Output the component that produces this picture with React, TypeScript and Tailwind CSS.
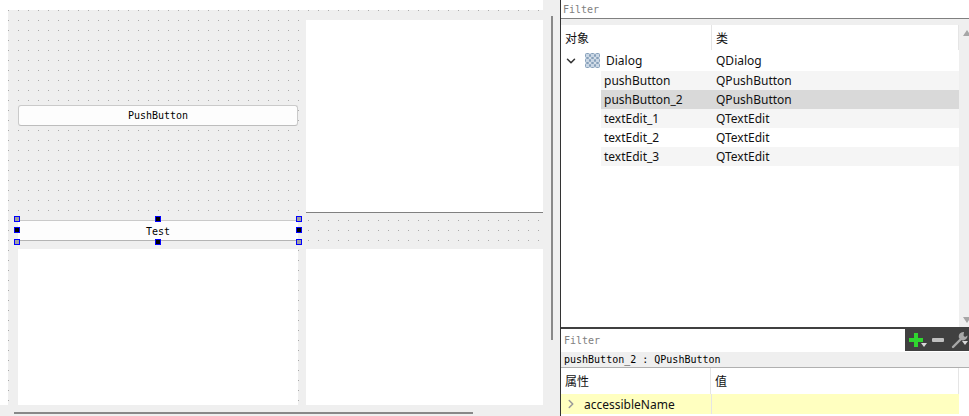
import React from 'react';
import { ChevronDown, ChevronRight } from 'lucide-react';

const mono = "font-['DejaVu_Sans_Mono',monospace] text-[10px] leading-none";
const ui = "font-['Noto_Sans','Noto_Sans_CJK_SC',sans-serif] text-[12px] leading-none text-[#111]";
const cjk = "font-['Noto_Sans_CJK_SC',sans-serif] text-[12px] leading-none text-[#111]";

const rows = [
  { name: 'pushButton', type: 'QPushButton', bg: 'bg-[#f5f5f5]' },
  { name: 'pushButton_2', type: 'QPushButton', bg: 'bg-[#d9d9d9]' },
  { name: 'textEdit_1', type: 'QTextEdit', bg: 'bg-[#f5f5f5]' },
  { name: 'textEdit_2', type: 'QTextEdit', bg: 'bg-white' },
  { name: 'textEdit_3', type: 'QTextEdit', bg: 'bg-[#f5f5f5]' }
];

function Handle({ className }: { className: string }) {
  return <div className={`absolute h-[6px] w-[6px] border border-[#0000ff] ${className}`} />;
}

function FormView() {
  return <div className="h-[395px] w-[535px] bg-[#efefef] bg-[conic-gradient(at_1px_1px,transparent_75%,#ababab_0)] bg-[length:10px_10px] pt-[10px]">
      <div className="grid grid-cols-[298px_237px] grid-rows-[193px_36px_156px]">
        <div className="pl-[10px] pt-[85px]">
          <div className={`flex h-[21px] w-[280px] items-center justify-center rounded-[3px] border border-[#cacaca] border-b-[#bdbdbd] bg-[#fdfdfd] pt-[1px] text-black ${mono}`}>
            PushButton
          </div>
        </div>
        <div className="border-b border-[#808080] bg-white" />
        <div className="pl-[10px] pt-[7px]">
          <div className={`relative flex h-[21px] w-[280px] items-center justify-center border-y border-t-[#cacaca] border-b-[#b4b4b4] bg-[#fdfdfd] pt-[2px] text-black ${mono}`}>
            Test
            <Handle className="left-[-4px] top-[-5px] bg-[#a0a0a0]" />
            <Handle className="left-[137px] top-[-5px] bg-black" />
            <Handle className="left-[278px] top-[-5px] bg-[#a0a0a0]" />
            <Handle className="left-[-4px] top-[6px] bg-black" />
            <Handle className="left-[278px] top-[6px] bg-black" />
            <Handle className="left-[-4px] top-[18px] bg-[#a0a0a0]" />
            <Handle className="left-[137px] top-[18px] bg-black" />
            <Handle className="left-[278px] top-[18px] bg-[#a0a0a0]" />
          </div>
        </div>
        <div />
        <div className="pl-[10px]">
          <div className="h-full w-[280px] bg-white" />
        </div>
        <div className="bg-white" />
      </div>
    </div>;
}

function DialogIcon() {
  return <svg width="15" height="15" viewBox="0 0 15 15">
      {[0, 5, 10].map(y => [0, 5, 10].map(x => <rect key={`${x}-${y}`} x={x + 0.5} y={y + 0.5} width="4" height="4" rx="1" fill="#c9d6e4" stroke="#86a0ba" />))}
    </svg>;
}

function ObjectTree() {
  return <div className="flex h-[302px]">
      <div className="w-[398px] bg-white">
        <div className="flex h-[25px]">
          <div className={`flex w-[151px] items-center border-r border-[#e5e5e5] pl-[4px] ${cjk}`}>对象</div>
          <div className={`flex flex-1 items-center border-r border-[#e5e5e5] pl-[4px] ${cjk}`}>类</div>
        </div>
        <div className="flex h-[21px] items-center">
          <ChevronDown className="ml-[3px] h-[14px] w-[14px] text-[#333]" strokeWidth={2.6} />
          <div className="ml-[7px]"><DialogIcon /></div>
          <span className={`ml-[6px] w-[110px] ${ui}`}>Dialog</span>
          <span className={ui}>QDialog</span>
        </div>
        {rows.map(row => <div key={row.name} className={`ml-[40px] flex h-[19px] items-center pl-[3px] ${row.bg}`}>
            <span className={`w-[112px] ${ui}`}>{row.name}</span>
            <span className={ui}>{row.type}</span>
          </div>)}
      </div>
      <div className="flex w-[10px] flex-col justify-between bg-[#efefef] pl-[4px] pb-[4px] pt-[5px]">
        <svg width="8" height="6" viewBox="0 0 8 6"><path d="M4 0 L8 6 L0 6 Z" fill="#a6a6a6" /></svg>
        <svg width="8" height="6" viewBox="0 0 8 6"><path d="M0 0 L8 0 L4 6 Z" fill="#a6a6a6" /></svg>
      </div>
    </div>;
}

function Toolbar() {
  return <div className="flex h-[24px] w-[64px] items-center bg-[#404040] pt-[1px]">
      <div className="relative ml-[3px] h-[16px] w-[16px]">
        <svg width="16" height="16" viewBox="0 0 16 16">
          <path d="M6 1 H10 V6 H15 V10 H10 V15 H6 V10 H1 V6 H6 Z" fill="#2fd62f" />
        </svg>
        <svg className="absolute bottom-[1px] right-[-3px]" width="6" height="4" viewBox="0 0 6 4"><path d="M0 0 H6 L3 4 Z" fill="#d8d8d8" /></svg>
      </div>
      <div className="ml-[8px] h-[4px] w-[15px] rounded-[1px] bg-[#c0c0c0]" />
      <div className="relative ml-[7px] h-[18px] w-[18px] shrink-0">
        <svg width="18" height="18" viewBox="0 0 18 18">
          <path d="M2 16 L10 8" stroke="#a8a8a8" strokeWidth="2.4" strokeLinecap="round" />
          <path d="M13 1 A4.6 4.6 0 0 0 8 7 L10 9 A4.6 4.6 0 0 0 16.5 4.5 L14 6 L12.5 4.5 Z" fill="#a8a8a8" />
        </svg>
        <svg className="absolute bottom-[4px] right-[1px]" width="6" height="4" viewBox="0 0 6 4"><path d="M0 0 H6 L3 4 Z" fill="#d8d8d8" /></svg>
      </div>
    </div>;
}

export default function App() {
  return <div className="flex h-[416px] w-[969px] overflow-hidden bg-white">
      <div className="flex w-[561px] flex-col border-r border-[#333333]">
        <div className="flex h-[405px]">
          <div className="w-[543px] pl-[8px] pt-[10px]">
            <FormView />
          </div>
          <div className="flex-1 bg-[#efefef] pl-[8px] pt-[16px]">
            <div className="h-[324px] w-[2px] bg-[#888888]" />
          </div>
        </div>
        <div className="flex-1 bg-[#efefef] pl-[14px] pt-[7px]">
          <div className="h-[2px] w-[459px] bg-[#888888]" />
        </div>
      </div>
      <div className="flex w-[408px] flex-col">
        <div className={`flex h-[19px] items-center border-b border-[#808080] pl-[2px] pt-[2px] text-[#808080] ${mono}`}>Filter</div>
        <div className="h-[6px] bg-[#efefef]" />
        <ObjectTree />
        <div className="flex h-[25px] border-t-2 border-[#404040]">
          <div className={`flex flex-1 items-center pl-[3px] pt-[1px] text-[#808080] ${mono}`}>Filter</div>
          <div className="mt-[-2px]"><Toolbar /></div>
        </div>
        <div className={`flex h-[16px] items-center border-b border-[#b0b0b0] bg-[#efefef] pl-[3px] pt-[1px] text-black ${mono}`}>
          pushButton_2 : QPushButton
        </div>
        <div className="flex h-[26px] w-[398px] bg-white">
          <div className={`flex w-[150px] items-center border-r border-[#e5e5e5] pl-[4px] ${cjk}`}>属性</div>
          <div className={`flex flex-1 items-center border-r border-[#e5e5e5] pl-[4px] ${cjk}`}>值</div>
        </div>
        <div className="flex h-[20px] w-[398px] items-center bg-[#ffffc0]">
          <ChevronRight className="ml-[3px] h-[14px] w-[14px] text-[#999]" strokeWidth={2.6} />
          <span className={`ml-[6px] w-[127px] pt-[1px] ${ui}`}>accessibleName</span>
          <div className="h-full w-px bg-[#e5e5e5]" />
        </div>
      </div>
    </div>;
}
